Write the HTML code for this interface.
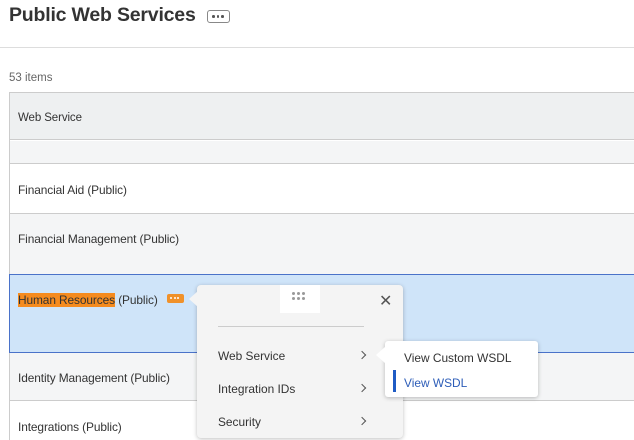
<!DOCTYPE html>
<html><head><style>
*{margin:0;padding:0;box-sizing:border-box}
body{width:634px;height:440px;overflow:hidden;background:#fff;font-family:"Liberation Sans",Arial,sans-serif;position:relative;color:#333}
.abs{position:absolute}
h1{position:absolute;left:9px;top:4px;font-size:19.5px;font-weight:bold;color:#333;letter-spacing:-0.2px}
.t{font-size:11.9px;color:#333;position:absolute;left:18px;letter-spacing:-0.1px}
.dots{position:absolute;display:flex;gap:2px}
.dots i{display:block;width:3px;height:3px;border-radius:50%;background:#999}
.chev{position:absolute;width:6px;height:6px;border-top:1.3px solid #555;border-right:1.3px solid #555;transform:rotate(45deg)}
</style></head><body>
<h1>Public Web Services</h1>
<div class="abs" style="left:207px;top:10px;width:23px;height:13px;border:1px solid #888;border-radius:3px"></div>
<div class="dots" style="left:212px;top:15px"><i style="background:#555;width:2.5px;height:2.5px"></i><i style="background:#555;width:2.5px;height:2.5px"></i><i style="background:#555;width:2.5px;height:2.5px"></i></div>
<div class="abs" style="left:0;top:47px;width:634px;height:1px;background:#ddd"></div>
<div class="abs" style="left:9px;top:72px;font-size:11.5px;color:#666">53 items</div>
<div class="abs" style="left:9px;top:92px;width:625px;height:348px;border-left:1px solid #ccc;border-top:1px solid #ccc"></div>
<div class="abs" style="left:10px;top:93px;width:624px;height:47px;background:#eef0f1;border-bottom:1px solid #ccc"></div>
<div class="t" style="top:112px;font-size:11.5px">Web Service</div>
<div class="abs" style="left:10px;top:141px;width:624px;height:23px;background:#f4f5f6;border-bottom:1px solid #ccc"></div>
<div class="t" style="top:183px">Financial Aid (Public)</div>
<div class="abs" style="left:10px;top:213px;width:624px;height:1px;background:#ccc"></div>
<div class="abs" style="left:10px;top:214px;width:624px;height:60px;background:#f4f5f6"></div>
<div class="t" style="top:232px">Financial Management (Public)</div>
<div class="abs" style="left:9px;top:274px;width:625px;height:79px;background:#cfe4f9;border:1px solid #4a72c9;border-right:none"></div>
<div class="t" style="top:293px"><span style="background:#f58b1f">Human Resources</span> (Public)</div>
<div class="abs" style="left:167px;top:294px;width:17px;height:9px;background:#f0912a;border-radius:2px"></div>
<div class="dots" style="left:170px;top:297px;gap:1.5px"><i style="background:#fff;width:2px;height:2px"></i><i style="background:#fff;width:2px;height:2px"></i><i style="background:#fff;width:2px;height:2px"></i></div>
<div class="abs" style="left:10px;top:353px;width:624px;height:48px;background:#f4f5f6;border-bottom:1px solid #ccc"></div>
<div class="t" style="top:371px">Identity Management (Public)</div>
<div class="t" style="top:420px">Integrations (Public)</div>
<!-- popup -->
<div class="abs" style="left:197px;top:285px;width:206px;height:153px;background:#f4f4f4;border-radius:4px;box-shadow:0 1px 4px rgba(0,0,0,.25)"></div>
<div class="abs" style="left:189px;top:291px;width:0;height:0;border-top:8px solid transparent;border-bottom:8px solid transparent;border-right:9px solid #f4f4f4"></div>
<div class="abs" style="left:280px;top:285px;width:40px;height:28px;background:#fff"></div>
<div class="dots" style="left:292px;top:292px"><i></i><i></i><i></i></div>
<div class="dots" style="left:292px;top:297px"><i></i><i></i><i></i></div>
<div class="abs" style="left:379px;top:291px;font-size:16px;color:#555">✕</div>
<div class="abs" style="left:218px;top:326px;width:146px;height:1px;background:#ccc"></div>
<div class="abs" style="left:218px;top:349px;font-size:11.9px">Web Service</div>
<div class="abs" style="left:218px;top:382px;font-size:11.9px">Integration IDs</div>
<div class="abs" style="left:218px;top:415px;font-size:11.9px">Security</div>
<div class="chev" style="left:359px;top:352px"></div>
<div class="chev" style="left:359px;top:385px"></div>
<div class="chev" style="left:359px;top:418px"></div>
<!-- submenu -->
<div class="abs" style="left:385px;top:341px;width:153px;height:56px;background:#fff;border-radius:3px;box-shadow:0 1px 4px rgba(0,0,0,.25)"></div>
<div class="abs" style="left:376px;top:347px;width:0;height:0;border-top:8px solid transparent;border-bottom:8px solid transparent;border-right:9px solid #fff"></div>
<div class="abs" style="left:404px;top:351px;font-size:11.9px;color:#333">View Custom WSDL</div>
<div class="abs" style="left:393px;top:370px;width:3px;height:22px;background:#1f5bc4"></div>
<div class="abs" style="left:404px;top:376px;font-size:11.9px;color:#2d5db8">View WSDL</div>
</body></html>
